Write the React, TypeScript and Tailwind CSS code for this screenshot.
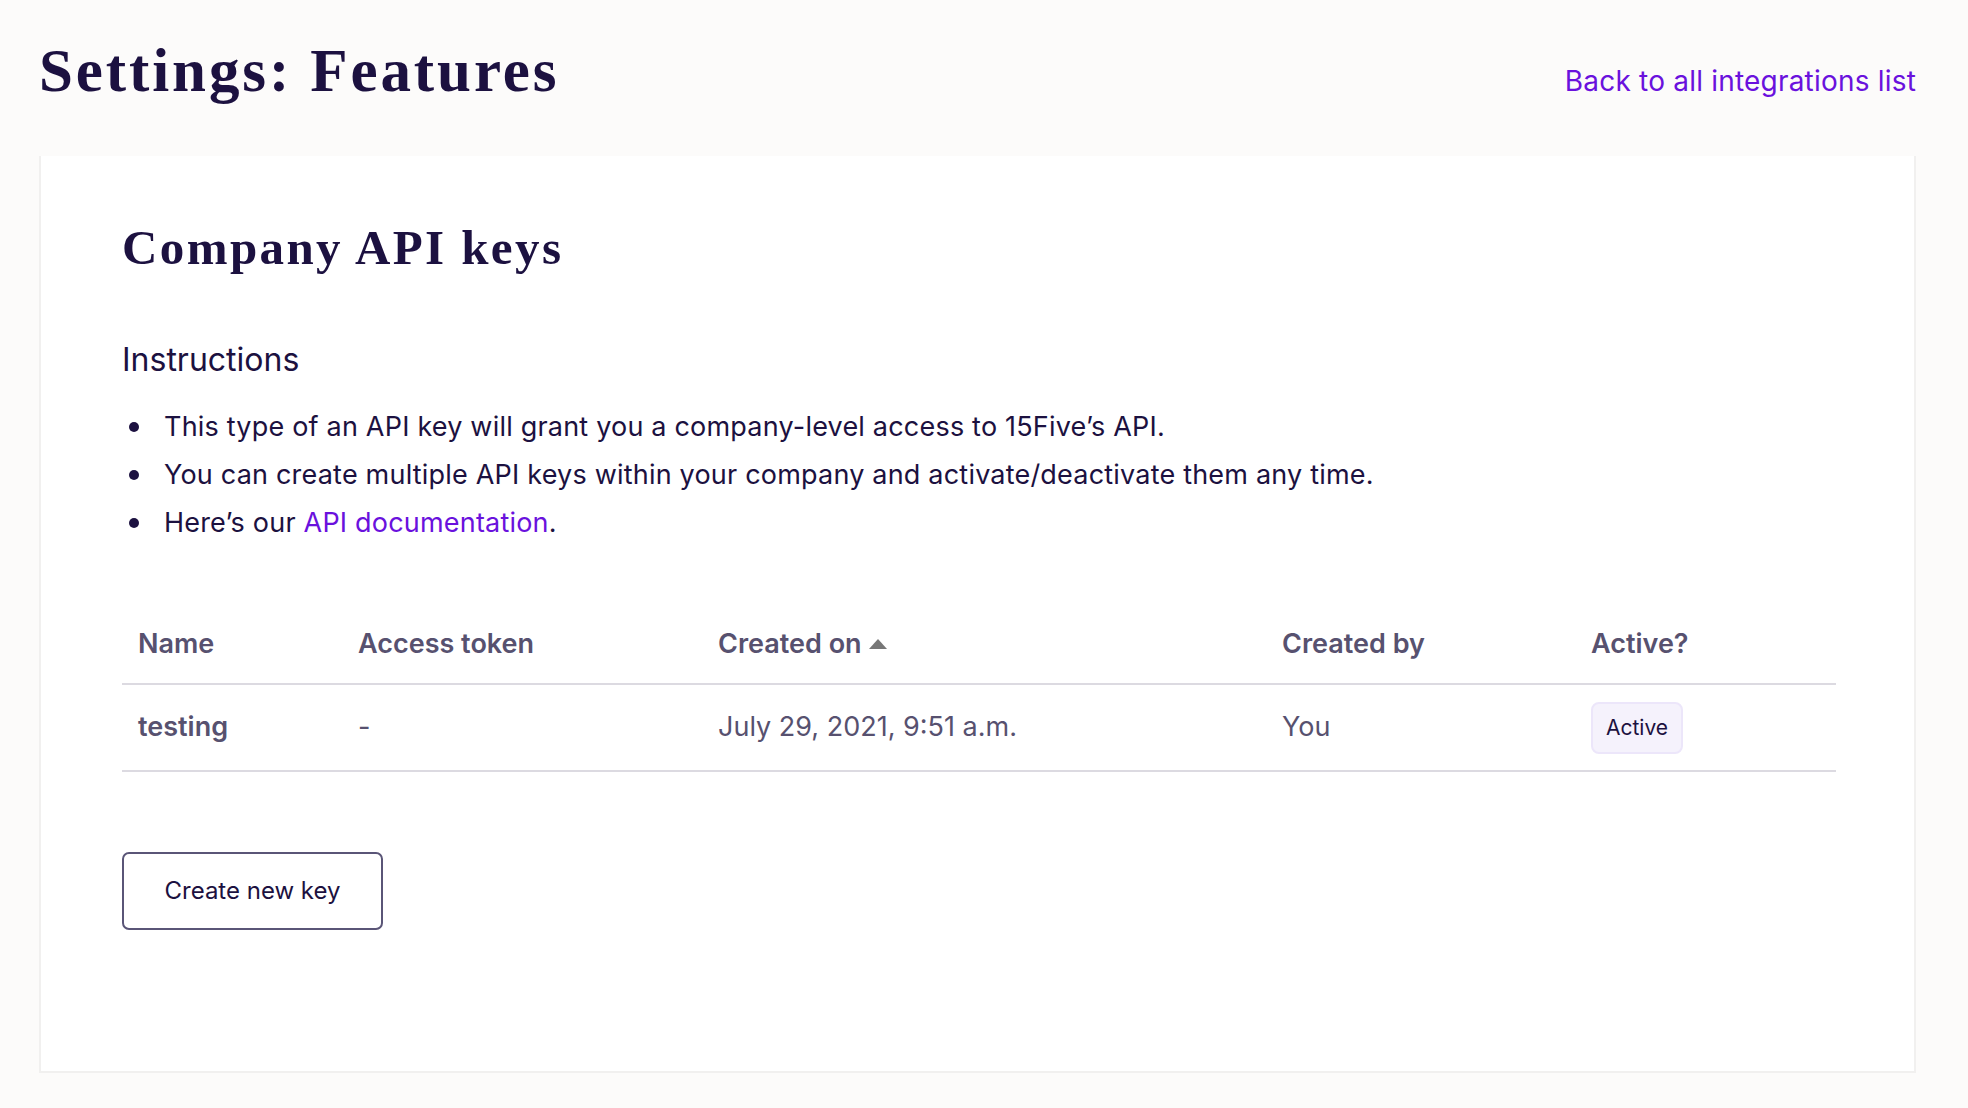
const serif = "font-['Liberation_Serif',serif]";
const sans = "font-['Inter',sans-serif]";

const bullets = [
  "This type of an API key will grant you a company-level access to 15Five’s API.",
  "You can create multiple API keys within your company and activate/deactivate them any time.",
];

function Caret() {
  return (
    <svg width="18" height="10" viewBox="0 0 18 10" className="ml-[7px] inline-block">
      <path d="M9 0 L18 10 L0 10 Z" fill="#777777" />
    </svg>
  );
}

function Dot() {
  return (
    <span className="w-[42px] flex">
      <span className="ml-[7px] w-[10px] h-[10px] rounded-full bg-[#1c1140]" />
    </span>
  );
}

export default function App() {
  const head = "px-[16px] pb-[24px] leading-[30px] font-semibold border-b-2 border-[#dcdae1]";
  const row = "px-[16px] h-[87px] flex items-center border-b-2 border-[#dcdae1]";
  return (
    <div className={`min-h-screen bg-[#fcfbfa] pl-[39px] pr-[52px] pb-[38px] ${sans}`}>
      <div className="flex items-baseline justify-between pt-[35px] mb-[49px]">
        <h1 className={`${serif} text-[61px] leading-[72px] font-bold tracking-[2.9px] text-[#1c1140]`}>
          Settings: Features
        </h1>
        <a href="#" className="text-[28px] leading-[32px] tracking-[0.2px] text-[#6a11dd]">
          Back to all integrations list
        </a>
      </div>

      <div className="bg-white border-x-2 border-b-2 border-[#f1f0ef] pl-[81px] pr-[78px] pt-[64px] pb-[141px]">
        <h2 className={`${serif} text-[49px] leading-[56px] font-bold tracking-[2.4px] text-[#1c1140]`}>
          Company API keys
        </h2>

        <h3 className="mt-[65px] text-[32px] leading-[38px] text-[#1c1140]">Instructions</h3>

        <ul className="mt-[24px] text-[27px] leading-[48px] tracking-[0.2px] text-[#1c1140]">
          {bullets.map((b) => (
            <li key={b} className="flex items-center">
              <Dot />
              <span>{b}</span>
            </li>
          ))}
          <li className="flex items-center">
            <Dot />
            <span>
              Here’s our <a href="#" className="text-[#6a11dd]">API documentation</a>.
            </span>
          </li>
        </ul>

        <div className="mt-[82px] grid grid-cols-[220px_360px_564px_309px_1fr] text-[27px] text-[#57516f]">
          <div className={head}>Name</div>
          <div className={head}>Access token</div>
          <div className={`${head} flex items-center`}>
            Created on
            <Caret />
          </div>
          <div className={head}>Created by</div>
          <div className={head}>Active?</div>

          <div className={`${row} font-semibold`}>testing</div>
          <div className={row}>-</div>
          <div className={row}>July 29, 2021, 9:51 a.m.</div>
          <div className={row}>You</div>
          <div className={row}>
            <span className="h-[52px] w-[92px] flex items-center justify-center rounded-[8px] border-2 border-[#ece6fa] bg-[#f5f2fc] text-[21px] text-[#1c1140]">
              Active
            </span>
          </div>
        </div>

        <button className="mt-[80px] w-[261px] h-[78px] rounded-[7px] border-2 border-[#5a5577] bg-white text-[24px] text-[#1c1140]">
          Create new key
        </button>
      </div>
    </div>
  );
}
